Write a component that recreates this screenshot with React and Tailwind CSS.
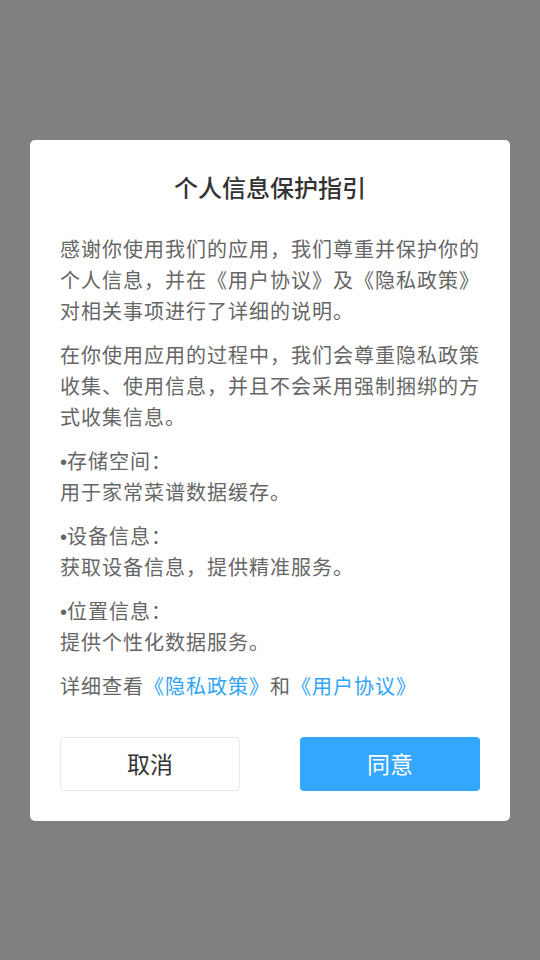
const cjk = { fontFamily: '"Noto Sans CJK SC", "Noto Sans", sans-serif' };

const intro = [
  ['感谢你使用我们的应用，我们尊重并保护你的', '个人信息，并在《用户协议》及《隐私政策》', '对相关事项进行了详细的说明。'],
  ['在你使用应用的过程中，我们会尊重隐私政策', '收集、使用信息，并且不会采用强制捆绑的方', '式收集信息。'],
];

const items = [
  { label: '存储空间：', text: '用于家常菜谱数据缓存。' },
  { label: '设备信息：', text: '获取设备信息，提供精准服务。' },
  { label: '位置信息：', text: '提供个性化数据服务。' },
];

export default function App() {
  return (
    <div className="flex h-[960px] w-full items-center justify-center bg-[#808080]" style={cjk}>
      <div className="w-[480px] rounded-[5px] bg-white px-[30px] pb-[30px] pt-[31px]">
        <h1 className="text-center text-[24px] font-medium leading-[32px] text-[#333]">
          个人信息保护指引
        </h1>

        <div className="mt-[30px] flex flex-col gap-[13px] whitespace-nowrap text-[20px] leading-[31px] tracking-[1px] text-[#666] [text-spacing-trim:space-all]">
          {intro.map((lines, i) => (
            <p key={i}>
              {lines.map((line) => (
                <span key={line} className="block">
                  {line}
                </span>
              ))}
            </p>
          ))}
          {items.map((item) => (
            <p key={item.label}>
              <span className="block">
                <span className="leading-none tracking-normal" style={{ fontFamily: '"Liberation Sans", sans-serif' }}>
                  •
                </span>
                {item.label}
              </span>
              <span className="block">{item.text}</span>
            </p>
          ))}
          <p>
            详细查看<span className="text-[#33a3f4]">《隐私政策》</span>和
            <span className="text-[#33a3f4]">《用户协议》</span>
          </p>
        </div>

        <div className="mt-[36px] flex justify-between">
          <button className="h-[54px] w-[180px] rounded-[4px] border border-[#e6e9ec] bg-white text-[23px] text-[#333]">
            取消
          </button>
          <button className="h-[54px] w-[180px] rounded-[4px] bg-[#33a6fd] text-[23px] text-white">
            同意
          </button>
        </div>
      </div>
    </div>
  );
}
